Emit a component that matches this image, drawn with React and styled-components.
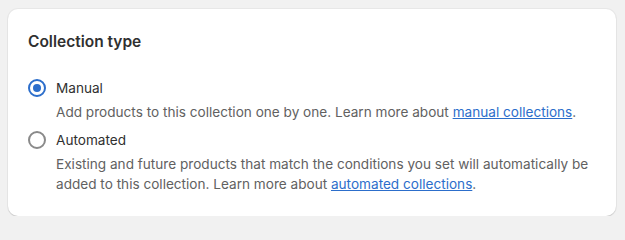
import React, { useState } from "react";
import styled, { createGlobalStyle } from "styled-components";

const GlobalStyle = createGlobalStyle`
  html, body {
    margin: 0;
    background: #f1f1f1;
    font-family: Inter, "Noto Sans", "Liberation Sans", sans-serif;
    -webkit-font-smoothing: antialiased;
  }
`;

const Page = styled.div`
  padding: 9px 9px 0 8px;
`;

const Card = styled.section`
  background: #fff;
  border-radius: 10px;
  box-shadow: 0 1px 1px rgba(0, 0, 0, 0.12), 0 0 0 1px rgba(0, 0, 0, 0.04);
  padding: 21px 20px 22px 20px;
`;

const Title = styled.h2`
  margin: 0 0 24px;
  font-size: 15.5px;
  line-height: 24px;
  font-weight: 600;
  color: #303030;
`;

const Options = styled.div`
  display: flex;
  flex-direction: column;
  gap: 8px;
`;

const Option = styled.label`
  display: grid;
  grid-template-columns: 18px 1fr;
  column-gap: 10px;
  cursor: pointer;
`;

const Radio = styled.span`
  width: 18px;
  height: 18px;
  margin-top: 1px;
  box-sizing: border-box;
  border-radius: 50%;
  border: ${({ $checked }) => ($checked ? "2px solid #2c6ecb" : "2px solid #8a8a8a")};
  display: flex;
  align-items: center;
  justify-content: center;

  &::after {
    content: "";
    width: 8px;
    height: 8px;
    border-radius: 50%;
    background: ${({ $checked }) => ($checked ? "#2c6ecb" : "transparent")};
  }
`;

const Label = styled.span`
  font-size: 13.6px;
  line-height: 20px;
  color: #303030;
`;

const Help = styled.p`
  grid-column: 2;
  margin: 4px 0 0;
  font-size: 13.6px;
  line-height: 20px;
  color: #616161;
`;

const Link = styled.a`
  color: #2c6ecb;
  text-decoration: underline;
`;

const options = [
  {
    id: "manual",
    label: "Manual",
    help: "Add products to this collection one by one. Learn more about ",
    link: "manual collections",
  },
  {
    id: "automated",
    label: "Automated",
    help: "Existing and future products that match the conditions you set will automatically be added to this collection. Learn more about ",
    link: "automated collections",
  },
];

export default function App() {
  const [type, setType] = useState("manual");
  return (
    <Page>
      <GlobalStyle />
      <Card>
        <Title>Collection type</Title>
        <Options>
          {options.map((opt) => (
            <Option key={opt.id} onClick={() => setType(opt.id)}>
              <Radio $checked={type === opt.id} />
              <Label>{opt.label}</Label>
              <Help>
                {opt.help}
                <Link href="#">{opt.link}</Link>.
              </Help>
            </Option>
          ))}
        </Options>
      </Card>
    </Page>
  );
}
